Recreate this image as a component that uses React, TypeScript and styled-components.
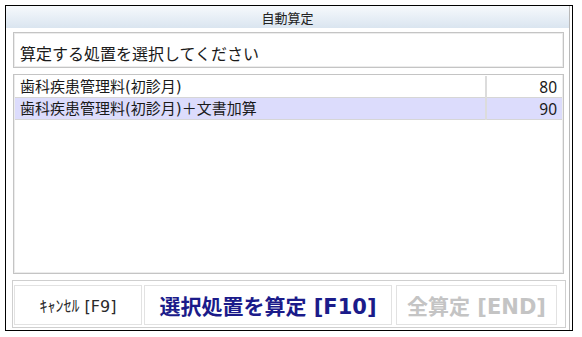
import React from "react";
import styled, { createGlobalStyle } from "styled-components";

const GlobalStyle = createGlobalStyle`
  html, body {
    margin: 0;
    padding: 0;
    background: #fff;
  }
  body {
    font-family: "DejaVu Sans", "Noto Sans CJK JP", sans-serif;
    color: #1a1a1a;
  }
`;

const Window = styled.div`
  box-sizing: border-box;
  margin: 5px 0 0 5px;
  width: 568px;
  height: 326px;
  border: 1px solid #000;
  box-shadow: inset -2px 0 0 #fff, inset -3px 0 0 #b8b8b8;
  display: flex;
  flex-direction: column;
  background: #fff;
`;

const TitleBar = styled.div`
  height: 22px;
  flex: none;
  display: flex;
  align-items: center;
  justify-content: center;
  background: linear-gradient(#f6f9fc, #dae5f0);
  font-family: "Noto Sans CJK JP", sans-serif;
  font-size: 13px;
  color: #222;
  margin-right: 3px;
`;

const Body = styled.div`
  flex: 1;
  display: flex;
  flex-direction: column;
  gap: 6px;
  padding: 4px 8px 4px 7px;
`;

const Prompt = styled.div`
  box-sizing: border-box;
  height: 36px;
  flex: none;
  border: 1px solid #c4c4c4;
  box-shadow: inset 0 0 0 1px #ececec;
  display: flex;
  align-items: center;
  padding: 5px 0 0 6px;
  font-family: "Noto Sans CJK JP", sans-serif;
  font-size: 16px;
  color: #1a1a1a;
`;

const List = styled.div`
  box-sizing: border-box;
  height: 200px;
  flex: none;
  border: 1px solid #c4c4c4;
  box-shadow: inset 0 0 0 1px #ececec;
  padding: 0 1px;
  display: flex;
  flex-direction: column;
`;

const Row = styled.div<{ $selected?: boolean }>`
  display: grid;
  grid-template-columns: 1fr 77px;
  height: 22px;
  box-sizing: border-box;
  border-bottom: 1px solid #d6d6d6;
  background: ${(p) => (p.$selected ? "#dcdcfc" : "#fff")};
  font-size: 15px;
  line-height: 22px;
  &:first-child {
    height: 23px;
    padding-top: 1px;
  }
`;

const NameCell = styled.div`
  padding-left: 5px;
  white-space: nowrap;
  overflow: hidden;
`;

const PointCell = styled.div`
  border-left: 2px solid #dcdcdc;
  text-align: right;
  padding-right: 5px;
  font-family: "Noto Sans", sans-serif;
  font-size: 15.5px;
`;

const ButtonPanel = styled.div`
  box-sizing: border-box;
  height: 48px;
  flex: none;
  margin: 0 -2px 0 -1px;
  border: 1px solid #cfcfcf;
  padding: 4px 7px 2px 1px;
  display: flex;
  gap: 2px;
`;

const Button = styled.button<{ $w: number; $tone: "normal" | "primary" | "disabled" }>`
  box-sizing: border-box;
  width: ${(p) => p.$w}px;
  height: 40px;
  margin-right: ${(p) => (p.$tone === "primary" ? 2 : 0)}px;
  background: #fff;
  border: 1px solid #e2e2e2;
  border-radius: 0;
  padding: 0;
  cursor: pointer;
  font-family: "DejaVu Sans", "Noto Sans CJK JP", sans-serif;
  font-size: ${(p) => (p.$tone === "normal" ? 16 : 21)}px;
  font-weight: ${(p) => (p.$tone === "normal" ? 400 : 700)};
  color: ${(p) =>
    p.$tone === "primary" ? "#1b1b8a" : p.$tone === "disabled" ? "#c4c4c4" : "#2a2a2a"};
  white-space: nowrap;
`;

const items = [
  { name: "歯科疾患管理料(初診月)", point: 80 },
  { name: "歯科疾患管理料(初診月)＋文書加算", point: 90 },
];

const App: React.FC = () => {
  return (
    <>
      <GlobalStyle />
      <Window>
        <TitleBar>自動算定</TitleBar>
        <Body>
          <Prompt>算定する処置を選択してください</Prompt>
          <List>
            {items.map((item, i) => (
              <Row key={item.name} $selected={i === 1}>
                <NameCell>{item.name}</NameCell>
                <PointCell>{item.point}</PointCell>
              </Row>
            ))}
          </List>
          <ButtonPanel>
            <Button $w={128} $tone="normal">ｷｬﾝｾﾙ [F9]</Button>
            <Button $w={248} $tone="primary">選択処置を算定 [F10]</Button>
            <Button $w={161} $tone="disabled">全算定 [END]</Button>
          </ButtonPanel>
        </Body>
      </Window>
    </>
  );
};

export default App;
